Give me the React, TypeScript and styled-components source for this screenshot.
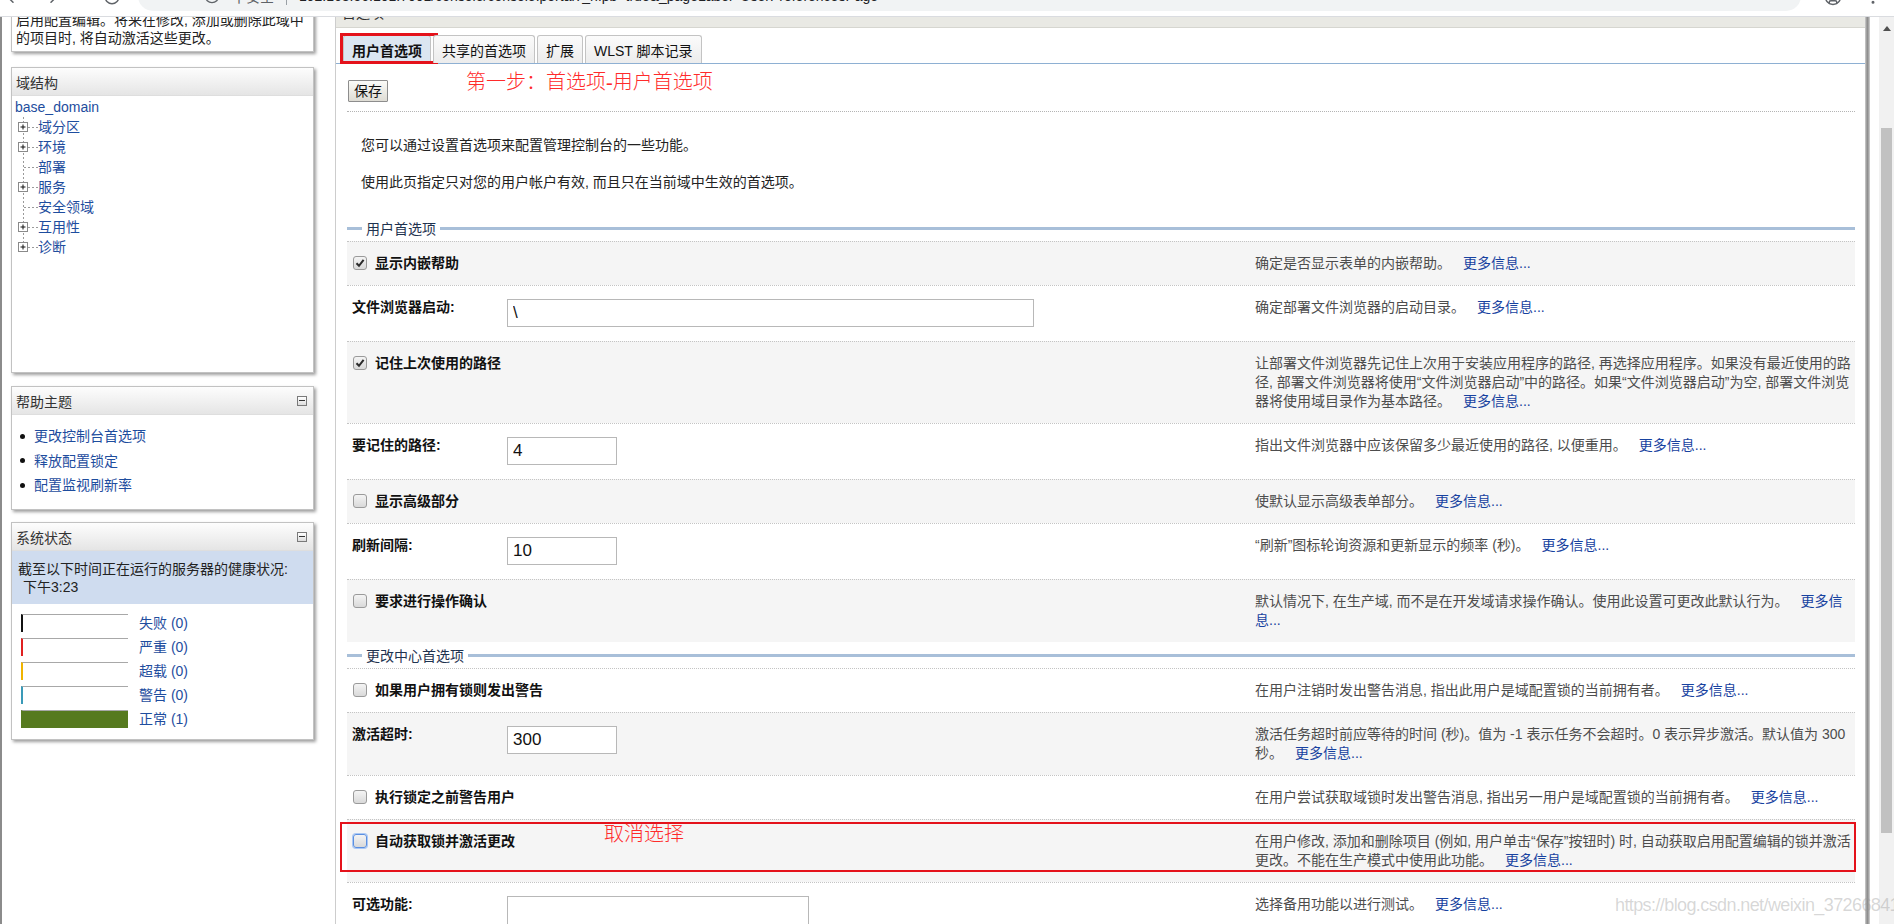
import React from "react";
import styled, { createGlobalStyle } from "styled-components";
import { ArrowLeft, ArrowRight, RotateCw, Info, MoreVertical, CircleUser } from "lucide-react";

const FONT = `"Liberation Sans", "Noto Sans CJK SC", sans-serif`;

const GlobalStyle = createGlobalStyle`
  html, body { margin: 0; padding: 0; background: #ffffff; }
  body { font-family: ${FONT}; font-size: 14px; color: #222; overflow: hidden; }
  *, *::before, *::after { box-sizing: border-box; }
`;

const Screen = styled.div`
  position: relative;
  width: 1894px;
  height: 924px;
  display: flex;
  flex-direction: column;
  overflow: hidden;
  background: #fff;
`;

/* ---------- browser chrome (clipped at the top) ---------- */
const Chrome = styled.div`
  flex: none;
  height: 17px;
  border-bottom: 1px solid #dadce0;
  display: flex;
  align-items: flex-end;
  overflow: hidden;
  padding-left: 4px;
  background: #fff;
  color: #5f6368;
`;

const ChromeIcon = styled.span<{ $gap: number }>`
  flex: none;
  display: flex;
  margin-left: ${(p) => p.$gap}px;
  margin-bottom: 10px;
`;

const AddressPill = styled.div`
  flex: none;
  margin-left: 17px;
  margin-bottom: 5px;
  width: 1663px;
  height: 30px;
  border-radius: 15px;
  background: #f1f3f4;
  display: flex;
  align-items: center;
  padding-left: 66px;
  gap: 12px;
  color: #5f6368;
  font-size: 14px;
  white-space: nowrap;
`;

const UrlDivider = styled.span`
  width: 1px;
  height: 18px;
  background: #9aa0a6;
`;

const UrlText = styled.span`
  color: #202124;
`;

/* ---------- page body ---------- */
const Body = styled.div`
  flex: 1;
  min-height: 0;
  display: flex;
  overflow: hidden;
`;

const LeftCol = styled.aside`
  flex: none;
  width: 336px;
  border-left: 2px solid #8b8b8b;
  border-right: 1px solid #cdcdcd;
  padding-left: 9px;
  display: flex;
  flex-direction: column;
  align-items: flex-start;
`;

const Portlet = styled.section<{ $gap: number }>`
  flex: none;
  width: 303px;
  margin-top: ${(p) => p.$gap}px;
  border: 1px solid #c2c2c2;
  background: #fff;
  box-shadow: 2px 2px 3px rgba(0, 0, 0, 0.38);
`;

const ChangeNote = styled.div`
  padding: 4px;
  line-height: 18px;
  color: #222;
`;

const NoteLine = styled.div`
  white-space: nowrap;
`;

const PortletHead = styled.header`
  height: 28px;
  border-bottom: 1px solid #dedede;
  background: linear-gradient(#fdfdfd, #e5e5e5);
  display: flex;
  align-items: center;
  justify-content: space-between;
  padding: 0 6px 0 4px;
  color: #333;
`;

const MinButton = styled.span`
  width: 10px;
  height: 10px;
  border: 1px solid #7a7a7a;
  background: linear-gradient(#ffffff, #dcdcdc);
  display: flex;
  align-items: center;
  justify-content: center;
  &::before {
    content: "";
    width: 6px;
    height: 1px;
    background: #333;
  }
`;

const TreeBody = styled.div`
  height: 276px;
  padding: 1px 0 0 3px;
  line-height: 20px;
  color: #1e4d9e;
`;

const TreeRoot = styled.div`
  height: 20px;
`;

const TreeRow = styled.div`
  display: flex;
  align-items: center;
  height: 20px;
`;

const HelpList = styled.ul`
  list-style: none;
  margin: 0;
  padding: 12px 0 15px 8px;
`;

const HelpItem = styled.li`
  display: flex;
  align-items: center;
  line-height: 18px;
  color: #1e4d9e;
  & + & {
    margin-top: 6.5px;
  }
  &::before {
    content: "";
    width: 5px;
    height: 5px;
    border-radius: 50%;
    background: #111;
    margin-right: 9px;
  }
`;

const StatusNote = styled.div`
  background: #cfdcef;
  padding: 9px 6px 8px;
  line-height: 18px;
  color: #222;
`;

const StatusTime = styled.div`
  padding-left: 5px;
`;

const StatusBars = styled.div`
  padding: 10px 9px 11px;
  display: flex;
  flex-direction: column;
  gap: 6px;
`;

const BarRow = styled.div`
  display: flex;
  align-items: center;
  gap: 11px;
  height: 18px;
`;

const HealthBar = styled.span<{ $color: string; $fill?: boolean }>`
  flex: none;
  width: 107px;
  height: 18px;
  border-top: 1px solid #a8a8a8;
  border-left: 2px solid ${(p) => p.$color};
  background: ${(p) => (p.$fill ? p.$color : "#fff")};
`;

const BarLabel = styled.span`
  color: #1e4d9e;
  line-height: 18px;
`;

/* ---------- main pane ---------- */
const MainPane = styled.main`
  flex: none;
  width: 1529px;
  display: flex;
  flex-direction: column;
  min-height: 0;
`;

const PaneTitle = styled.div`
  flex: none;
  height: 11px;
  background: #e9e9e4;
  border-bottom: 1px solid #d6d6d0;
  overflow: hidden;
  padding-left: 6px;
  color: #333;
`;

const PaneTitleText = styled.span`
  display: block;
  line-height: 16px;
  margin-top: -12px;
`;

const TabBar = styled.nav`
  flex: none;
  display: flex;
  gap: 2px;
  padding: 7px 0 0 7px;
  border-bottom: 1px solid #8eb0d3;
`;

const Tab = styled.div<{ $active?: boolean }>`
  position: relative;
  height: 28px;
  padding: 0 8px;
  display: flex;
  align-items: center;
  border: 1px solid #c3c3c3;
  border-bottom: none;
  border-radius: 3px 3px 0 0;
  background: ${(p) => (p.$active ? "#dbe6f1" : "linear-gradient(#fbfbfb, #ececec)")};
  font-weight: ${(p) => (p.$active ? "bold" : "normal")};
  color: #111;
  white-space: nowrap;
`;

const TabMark = styled.span`
  position: absolute;
  left: -4px;
  top: -3px;
  width: 98px;
  height: 31px;
  border: 3px solid #e4121b;
  pointer-events: none;
`;

const Content = styled.div`
  flex: 1;
  min-height: 0;
  padding: 0 10px 0 11px;
  display: flex;
  flex-direction: column;
`;

const Toolbar = styled.div`
  position: relative;
  flex: none;
  padding: 16px 0 9px 1px;
  border-bottom: 1px dotted #b4b4b4;
  display: flex;
`;

const SaveButton = styled.button`
  width: 40px;
  height: 22px;
  padding: 0;
  font-family: ${FONT};
  font-size: 14px;
  line-height: 20px;
  border: 1px solid #8d8d8d;
  border-radius: 1px;
  background: linear-gradient(#fbfbf8, #dedcd4);
  color: #111;
`;

const Annotation = styled.span<{ $left: number; $top: number }>`
  position: absolute;
  left: ${(p) => p.$left}px;
  top: ${(p) => p.$top}px;
  font-family: "Liberation Serif", "Noto Sans CJK SC", serif;
  font-size: 20px;
  font-weight: 300;
  line-height: 24px;
  color: #ff2b2b;
  white-space: nowrap;
  pointer-events: none;
`;

const Intro = styled.div`
  flex: none;
  padding: 24px 14px 23px;
  display: flex;
  flex-direction: column;
  gap: 18px;
  line-height: 19px;
  color: #222;
`;

const IntroText = styled.p`
  margin: 0;
`;

const SectionHead = styled.div`
  flex: none;
  height: 26px;
  display: flex;
  align-items: center;
  gap: 4px;
  color: #1f3350;
  &::before {
    content: "";
    width: 15px;
    height: 3px;
    background: #a8bfd9;
  }
  &::after {
    content: "";
    flex: 1;
    height: 3px;
    background: #a8bfd9;
  }
`;

const Row = styled.div<{ $shade: boolean }>`
  position: relative;
  flex: none;
  display: grid;
  grid-template-columns: 160px 742px 606px;
  border-top: 1px dotted #c4c4c4;
  background: ${(p) => (p.$shade ? "#f5f5f5" : "#ffffff")};
`;

const LabelCell = styled.div<{ $span?: boolean }>`
  grid-column: ${(p) => (p.$span ? "1 / 3" : "1")};
  padding: 12px 5px;
  line-height: 19px;
  font-weight: bold;
  color: #111;
  display: flex;
  align-items: flex-start;
  white-space: nowrap;
`;

const CheckBox = styled.span<{ $focused?: boolean }>`
  flex: none;
  width: 14px;
  height: 14px;
  margin: 2px 8px 0 1px;
  border: 1px solid ${(p) => (p.$focused ? "#5b8fe0" : "#9a9a9a")};
  box-shadow: ${(p) => (p.$focused ? "0 0 0 1px #a9c8f5" : "none")};
  border-radius: 3px;
  background: linear-gradient(#f4f4f4, #d9d9d9);
  display: flex;
  align-items: center;
  justify-content: center;
`;

const FieldCell = styled.div`
  grid-column: 2;
  padding: 13px 0 14px;
`;

const TextInput = styled.input<{ $w: number }>`
  display: block;
  width: ${(p) => p.$w}px;
  height: 28px;
  margin: 0;
  padding: 0 5px;
  border: 1px solid #b8b8b8;
  border-radius: 0;
  background: #fff;
  font-family: ${FONT};
  font-size: 17px;
  color: #111;
  outline: none;
`;

const TextBox = styled.textarea<{ $w: number }>`
  display: block;
  width: ${(p) => p.$w}px;
  height: 60px;
  margin: 0;
  padding: 4px;
  border: 1px solid #b8b8b8;
  border-radius: 0;
  resize: none;
  background: #fff;
  font-family: ${FONT};
  outline: none;
`;

const DescCell = styled.div`
  grid-column: 3;
  padding: 12px 0 12px 6px;
  line-height: 19px;
  color: #4d4d4d;
`;

const MoreLink = styled.a`
  margin-left: 12px;
  color: #1742a0;
  text-decoration: none;
`;

const RowMark = styled.span`
  position: absolute;
  top: 2px;
  left: -7px;
  right: -1px;
  height: 50px;
  border: 2px solid #e4121b;
  pointer-events: none;
`;

const FrameBar = styled.div`
  flex: none;
  width: 5px;
  background: linear-gradient(to right, #cfcfcf 0%, #8a8a8a 45%, #9c9c9c 65%, #d4d4d4 100%);
`;

const FrameGap = styled.div`
  flex: none;
  width: 9px;
  background: #fff;
`;

const ScrollTrack = styled.div`
  flex: none;
  width: 15px;
  background: #f1f1f1;
  display: flex;
  flex-direction: column;
  align-items: center;
`;

const ScrollArrow = styled.div`
  width: 100%;
  height: 22px;
  display: flex;
  align-items: center;
  justify-content: center;
  &::before {
    content: "";
    border-left: 4px solid transparent;
    border-right: 4px solid transparent;
    border-bottom: 5px solid #505050;
  }
`;

const ScrollThumb = styled.div`
  margin-top: 89px;
  width: 11px;
  height: 705px;
  background: #c1c1c1;
`;

const Watermark = styled.span`
  position: absolute;
  left: 1615px;
  top: 895px;
  font-family: "Liberation Sans", sans-serif;
  font-size: 18px;
  letter-spacing: -0.6px;
  color: rgba(150, 150, 150, 0.38);
  pointer-events: none;
  white-space: nowrap;
`;

/* ---------- drawings ---------- */
function TreeJoint({ expandable, last }: { expandable: boolean; last?: boolean }) {
  return (
    <svg width="23" height="20" viewBox="0 0 23 20" style={{ flex: "none" }}>
      <line x1="8.5" y1="0" x2="8.5" y2={last ? 10 : 20} stroke="#9a9a9a" strokeDasharray="2 2" />
      <line x1={expandable ? 13 : 9} y1="10.5" x2="23" y2="10.5" stroke="#9a9a9a" strokeDasharray="2 2" />
      {expandable && (
        <>
          <rect x="3.5" y="5.5" width="9" height="9" fill="#fff" stroke="#8a8a8a" />
          <line x1="5.5" y1="10" x2="10.5" y2="10" stroke="#111" />
          <line x1="8" y1="7.5" x2="8" y2="12.5" stroke="#111" />
        </>
      )}
    </svg>
  );
}

function CheckMark() {
  return (
    <svg width="10" height="10" viewBox="0 0 10 10">
      <path d="M1.5 5.2 L4 7.8 L8.6 1.8" fill="none" stroke="#2b2b2b" strokeWidth="2" />
    </svg>
  );
}

/* ---------- data ---------- */
type Pref =
  | { kind: "check"; label: string; checked?: boolean; focused?: boolean; desc: string; shade: boolean; note?: string }
  | { kind: "field"; label: string; value: string; width: number; multi?: boolean; desc: string; shade: boolean };

const userPrefs: Pref[] = [
  { kind: "check", label: "显示内嵌帮助", checked: true, shade: true, desc: "确定是否显示表单的内嵌帮助。" },
  { kind: "field", label: "文件浏览器启动:", value: "\\", width: 527, shade: false, desc: "确定部署文件浏览器的启动目录。" },
  {
    kind: "check",
    label: "记住上次使用的路径",
    checked: true,
    shade: true,
    desc: "让部署文件浏览器先记住上次用于安装应用程序的路径, 再选择应用程序。如果没有最近使用的路径, 部署文件浏览器将使用“文件浏览器启动”中的路径。如果“文件浏览器启动”为空, 部署文件浏览器将使用域目录作为基本路径。",
  },
  { kind: "field", label: "要记住的路径:", value: "4", width: 110, shade: false, desc: "指出文件浏览器中应该保留多少最近使用的路径, 以便重用。" },
  { kind: "check", label: "显示高级部分", shade: true, desc: "使默认显示高级表单部分。" },
  { kind: "field", label: "刷新间隔:", value: "10", width: 110, shade: false, desc: "“刷新”图标轮询资源和更新显示的频率 (秒)。" },
  { kind: "check", label: "要求进行操作确认", shade: true, desc: "默认情况下, 在生产域, 而不是在开发域请求操作确认。使用此设置可更改此默认行为。" },
];

const centerPrefs: Pref[] = [
  { kind: "check", label: "如果用户拥有锁则发出警告", shade: false, desc: "在用户注销时发出警告消息, 指出此用户是域配置锁的当前拥有者。" },
  {
    kind: "field",
    label: "激活超时:",
    value: "300",
    width: 110,
    shade: true,
    desc: "激活任务超时前应等待的时间 (秒)。值为 -1 表示任务不会超时。0 表示异步激活。默认值为 300 秒。",
  },
  { kind: "check", label: "执行锁定之前警告用户", shade: false, desc: "在用户尝试获取域锁时发出警告消息, 指出另一用户是域配置锁的当前拥有者。" },
  {
    kind: "check",
    label: "自动获取锁并激活更改",
    focused: true,
    shade: true,
    note: "取消选择",
    desc: "在用户修改, 添加和删除项目 (例如, 用户单击“保存”按钮时) 时, 自动获取启用配置编辑的锁并激活更改。不能在生产模式中使用此功能。",
  },
  { kind: "field", label: "可选功能:", value: "", width: 302, multi: true, shade: false, desc: "选择备用功能以进行测试。" },
];

const treeItems = [
  { label: "域分区", expandable: true },
  { label: "环境", expandable: true },
  { label: "部署", expandable: false },
  { label: "服务", expandable: true },
  { label: "安全领域", expandable: false },
  { label: "互用性", expandable: true },
  { label: "诊断", expandable: true },
];

const health = [
  { label: "失败 (0)", color: "#111111" },
  { label: "严重 (0)", color: "#e02020" },
  { label: "超载 (0)", color: "#f0b400" },
  { label: "警告 (0)", color: "#3a9ab8" },
  { label: "正常 (1)", color: "#567a1f", fill: true },
];

function PrefRow({ pref }: { pref: Pref }) {
  return (
    <Row $shade={pref.shade}>
      {pref.kind === "check" ? (
        <LabelCell $span>
          <CheckBox $focused={pref.focused}>{pref.checked && <CheckMark />}</CheckBox>
          {pref.label}
        </LabelCell>
      ) : (
        <>
          <LabelCell>{pref.label}</LabelCell>
          <FieldCell>
            {pref.multi ? (
              <TextBox $w={pref.width} readOnly />
            ) : (
              <TextInput $w={pref.width} readOnly value={pref.value} />
            )}
          </FieldCell>
        </>
      )}
      <DescCell>
        {pref.desc}
        <MoreLink href="#">更多信息...</MoreLink>
      </DescCell>
      {pref.kind === "check" && pref.note && (
        <>
          <RowMark />
          <Annotation $left={257} $top={2}>
            {pref.note}
          </Annotation>
        </>
      )}
    </Row>
  );
}

export default function App() {
  return (
    <Screen>
      <GlobalStyle />
      <Chrome>
        <ChromeIcon $gap={0}>
          <ArrowLeft size={18} />
        </ChromeIcon>
        <ChromeIcon $gap={20}>
          <ArrowRight size={18} />
        </ChromeIcon>
        <ChromeIcon $gap={43}>
          <RotateCw size={18} />
        </ChromeIcon>
        <AddressPill>
          <Info size={16} />
          <span>不安全</span>
          <UrlDivider />
          <UrlText>192.168.56.101:7001/console/console.portal?_nfpb=true&amp;_pageLabel=UserPreferencesPage</UrlText>
        </AddressPill>
        <ChromeIcon $gap={23}>
          <CircleUser size={18} />
        </ChromeIcon>
        <ChromeIcon $gap={22}>
          <MoreVertical size={18} />
        </ChromeIcon>
      </Chrome>

      <Body>
        <LeftCol>
          <Portlet $gap={-29}>
            <ChangeNote>
              <NoteLine>更改中心已</NoteLine>
              <NoteLine>启用配置编辑。将来在修改, 添加或删除此域中</NoteLine>
              <NoteLine>的项目时, 将自动激活这些更改。</NoteLine>
            </ChangeNote>
          </Portlet>

          <Portlet $gap={15}>
            <PortletHead>域结构</PortletHead>
            <TreeBody>
              <TreeRoot>base_domain</TreeRoot>
              {treeItems.map((t, i) => (
                <TreeRow key={t.label}>
                  <TreeJoint expandable={t.expandable} last={i === treeItems.length - 1} />
                  {t.label}
                </TreeRow>
              ))}
            </TreeBody>
          </Portlet>

          <Portlet $gap={13}>
            <PortletHead>
              帮助主题
              <MinButton />
            </PortletHead>
            <HelpList>
              <HelpItem>更改控制台首选项</HelpItem>
              <HelpItem>释放配置锁定</HelpItem>
              <HelpItem>配置监视刷新率</HelpItem>
            </HelpList>
          </Portlet>

          <Portlet $gap={12}>
            <PortletHead>
              系统状态
              <MinButton />
            </PortletHead>
            <StatusNote>
              <div>截至以下时间正在运行的服务器的健康状况:</div>
              <StatusTime>下午3:23</StatusTime>
            </StatusNote>
            <StatusBars>
              {health.map((h) => (
                <BarRow key={h.label}>
                  <HealthBar $color={h.color} $fill={h.fill} />
                  <BarLabel>{h.label}</BarLabel>
                </BarRow>
              ))}
            </StatusBars>
          </Portlet>
        </LeftCol>

        <MainPane>
          <PaneTitle>
            <PaneTitleText>首选项</PaneTitleText>
          </PaneTitle>
          <TabBar>
            <Tab $active>
              用户首选项
              <TabMark />
            </Tab>
            <Tab>共享的首选项</Tab>
            <Tab>扩展</Tab>
            <Tab>WLST 脚本记录</Tab>
          </TabBar>
          <Content>
            <Toolbar>
              <SaveButton>保存</SaveButton>
              <Annotation $left={119} $top={6}>
                第一步：首选项-用户首选项
              </Annotation>
            </Toolbar>
            <Intro>
              <IntroText>您可以通过设置首选项来配置管理控制台的一些功能。</IntroText>
              <IntroText>使用此页指定只对您的用户帐户有效, 而且只在当前域中生效的首选项。</IntroText>
            </Intro>
            <SectionHead>用户首选项</SectionHead>
            {userPrefs.map((p) => (
              <PrefRow key={p.label} pref={p} />
            ))}
            <SectionHead>更改中心首选项</SectionHead>
            {centerPrefs.map((p) => (
              <PrefRow key={p.label} pref={p} />
            ))}
          </Content>
        </MainPane>
        <FrameBar />
        <FrameGap />
        <ScrollTrack>
          <ScrollArrow />
          <ScrollThumb />
        </ScrollTrack>
      </Body>
      <Watermark>https://blog.csdn.net/weixin_37266841</Watermark>
    </Screen>
  );
}
